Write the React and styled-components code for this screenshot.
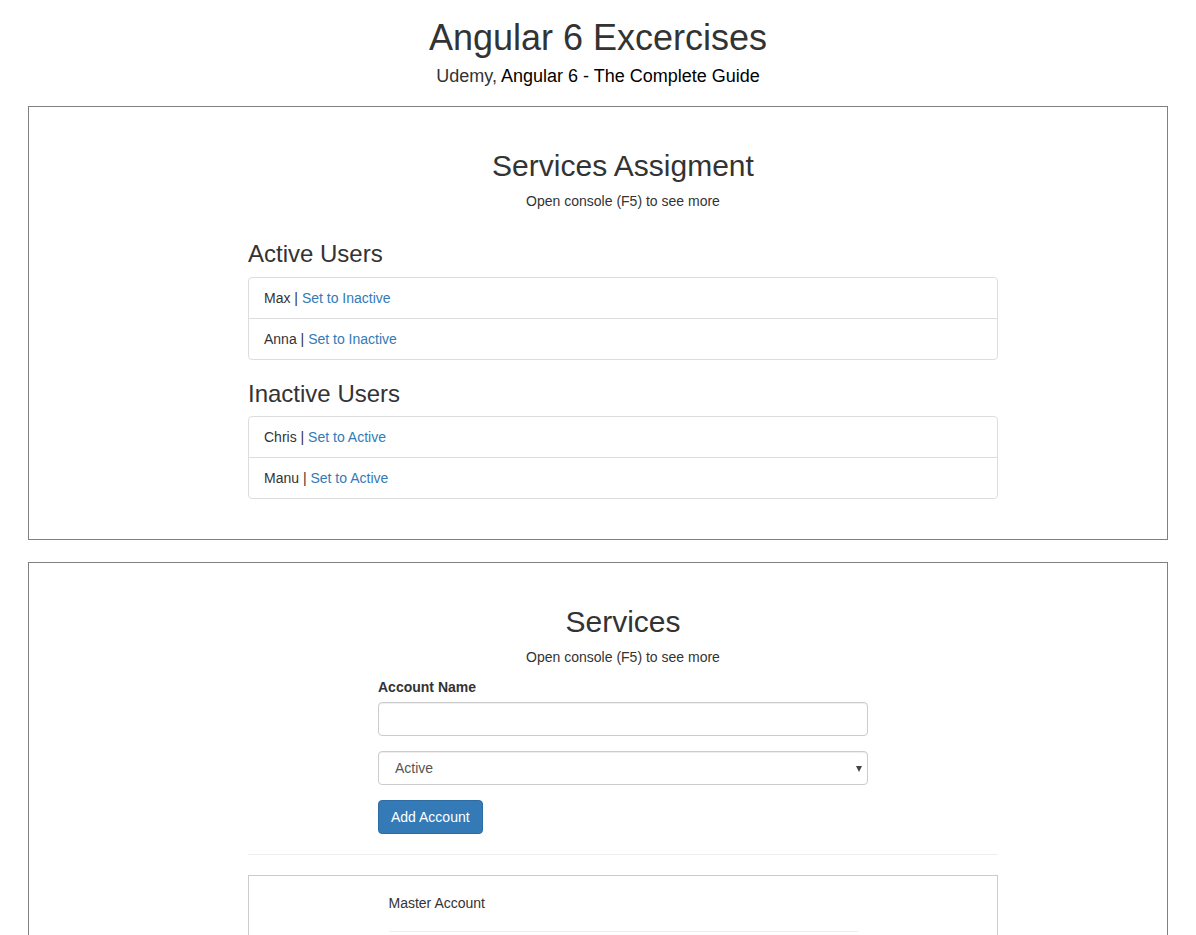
import React from "react";
import styled, { createGlobalStyle } from "styled-components";

const GlobalStyle = createGlobalStyle`
  * { box-sizing: border-box; }
  html, body { margin: 0; padding: 0; background: #fff; }
  body {
    font-family: "Liberation Sans", Arial, Helvetica, sans-serif;
    font-size: 14px;
    line-height: 1.42857143;
    color: #333;
  }
`;

const Page = styled.div`
  padding: 0 28px 40px;
`;

const Header = styled.header`
  text-align: center;
  margin-bottom: 17px;
`;

const Title = styled.h1`
  font-size: 36px;
  font-weight: 500;
  line-height: 1.1;
  margin: 18px 0 0;
  color: #333;
`;

const Subtitle = styled.div`
  font-size: 18px;
  margin-top: 6px;
  color: #333;
`;

const CourseName = styled.span`
  color: #000;
`;

const Card = styled.section`
  border: 1px solid #808080;
  padding: 20px 0 19px 219px;
  margin-bottom: 22px;
`;

const Column = styled.div`
  width: 750px;
`;

const Intro = styled.div`
  margin-bottom: 10px;
`;

const SectionTitle = styled.h2`
  font-size: 30px;
  font-weight: 500;
  line-height: 1.1;
  text-align: center;
  margin: 22px 0 9px;
  color: #333;
`;

const Hint = styled.p`
  text-align: center;
  margin: 0;
`;

const UserBlock = styled.div`
  display: flow-root;
`;

const ListTitle = styled.h3`
  font-size: 24px;
  font-weight: 500;
  line-height: 1.1;
  margin: 20px 0 9px;
  color: #333;
`;

const ListGroup = styled.ul`
  list-style: none;
  padding: 0;
  margin: 0 0 21px;
`;

const ListItem = styled.li`
  display: block;
  padding: 10px 15px;
  border: 1px solid #ddd;
  margin-bottom: -1px;
  background: #fff;
  &:first-child {
    border-top-left-radius: 4px;
    border-top-right-radius: 4px;
  }
  &:last-child {
    margin-bottom: 0;
    border-bottom-left-radius: 4px;
    border-bottom-right-radius: 4px;
  }
`;

const Link = styled.a`
  color: #337ab7;
  text-decoration: none;
  cursor: pointer;
`;

const Form = styled.form`
  width: 490px;
  margin: 0 auto;
`;

const FormGroup = styled.div`
  margin-bottom: 15px;
`;

const Label = styled.label`
  display: inline-block;
  font-weight: bold;
  margin-bottom: 5px;
`;

const Input = styled.input`
  display: block;
  width: 100%;
  height: 34px;
  padding: 6px 12px;
  font-family: inherit;
  font-size: 14px;
  color: #555;
  background: #fff;
  border: 1px solid #ccc;
  border-radius: 4px;
  box-shadow: inset 0 1px 1px rgba(0, 0, 0, 0.075);
  outline: none;
`;

const SelectWrap = styled.div`
  position: relative;
`;

const Select = styled.select`
  display: block;
  width: 100%;
  height: 34px;
  padding: 6px 12px 6px 16px;
  font-family: inherit;
  font-size: 14px;
  color: #555;
  background: #fff;
  border: 1px solid #ccc;
  border-radius: 4px;
  box-shadow: inset 0 1px 1px rgba(0, 0, 0, 0.075);
  appearance: none;
  -webkit-appearance: none;
  outline: none;
`;

const Caret = styled.span`
  position: absolute;
  right: 6px;
  top: 15px;
  width: 0;
  height: 0;
  border-left: 3.5px solid transparent;
  border-right: 3.5px solid transparent;
  border-top: 6px solid #444;
  pointer-events: none;
`;

const Button = styled.button`
  display: inline-block;
  padding: 6px 12px;
  font-family: inherit;
  font-size: 14px;
  line-height: 1.42857143;
  color: #fff;
  background: #337ab7;
  border: 1px solid #2e6da4;
  border-radius: 4px;
  cursor: pointer;
`;

const Rule = styled.hr`
  border: 0;
  border-top: 1px solid #eee;
  margin: 20px 0;
`;

const AccountCard = styled.div`
  border: 1px solid #ccc;
  padding: 17px 0 60px;
`;

const AccountBody = styled.div`
  width: 469px;
  margin: 0 auto;
`;

const AccountName = styled.div`
  color: #333;
`;

const AccountRule = styled.hr`
  border: 0;
  border-top: 1px solid #eee;
  margin: 18px 0 0;
`;

const activeUsers = ["Max", "Anna"];
const inactiveUsers = ["Chris", "Manu"];

export default function App() {
  return (
    <>
      <GlobalStyle />
      <Page>
        <Header>
          <Title>Angular 6 Excercises</Title>
          <Subtitle>
            Udemy, <CourseName>Angular 6 - The Complete Guide</CourseName>
          </Subtitle>
        </Header>

        <Card>
          <Column>
            <Intro>
              <SectionTitle>Services Assigment</SectionTitle>
              <Hint>Open console (F5) to see more</Hint>
            </Intro>
            <UserBlock>
              <ListTitle>Active Users</ListTitle>
              <ListGroup>
                {activeUsers.map((u) => (
                  <ListItem key={u}>
                    {u} | <Link>Set to Inactive</Link>
                  </ListItem>
                ))}
              </ListGroup>
              <ListTitle>Inactive Users</ListTitle>
              <ListGroup>
                {inactiveUsers.map((u) => (
                  <ListItem key={u}>
                    {u} | <Link>Set to Active</Link>
                  </ListItem>
                ))}
              </ListGroup>
            </UserBlock>
          </Column>
        </Card>

        <Card>
          <Column>
            <Intro>
              <SectionTitle>Services</SectionTitle>
              <Hint>Open console (F5) to see more</Hint>
            </Intro>
            <Form onSubmit={(e) => e.preventDefault()}>
              <FormGroup>
                <Label>Account Name</Label>
                <Input type="text" />
              </FormGroup>
              <FormGroup>
                <SelectWrap>
                  <Select defaultValue="active">
                    <option value="active">Active</option>
                    <option value="inactive">Inactive</option>
                    <option value="hidden">Hidden</option>
                  </Select>
                  <Caret />
                </SelectWrap>
              </FormGroup>
              <Button type="submit">Add Account</Button>
            </Form>
            <Rule />
            <AccountCard>
              <AccountBody>
                <AccountName>Master Account</AccountName>
                <AccountRule />
              </AccountBody>
            </AccountCard>
          </Column>
        </Card>
      </Page>
    </>
  );
}
